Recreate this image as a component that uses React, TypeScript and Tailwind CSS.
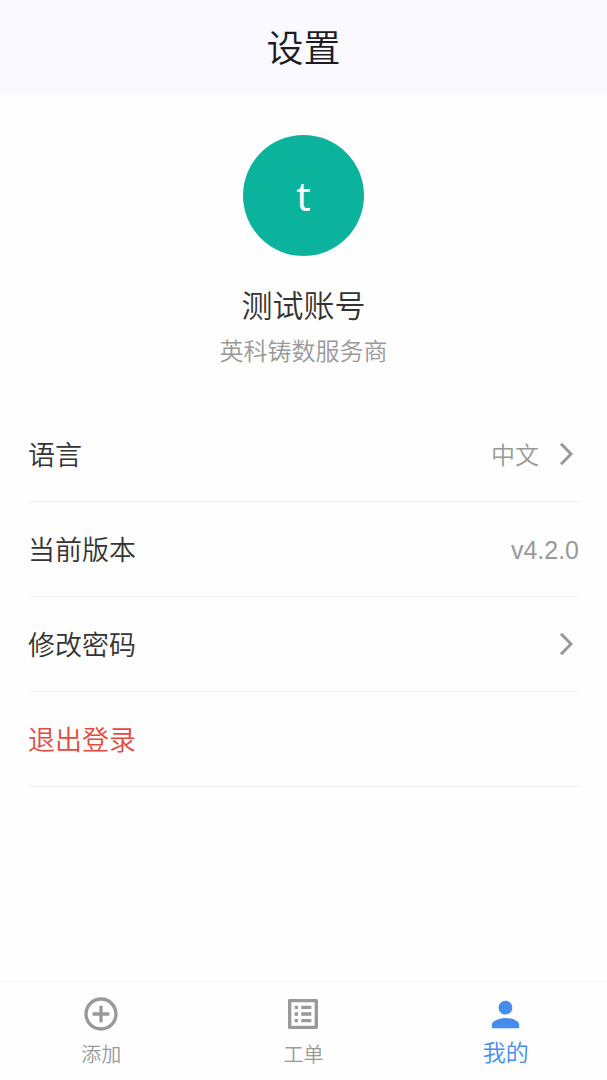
import React from 'react';
import { MdAddCircleOutline, MdListAlt, MdPerson } from 'react-icons/md';

interface SettingRow {
  id: string;
  label: string;
  value?: string;
  arrow?: boolean;
  danger?: boolean;
}

const rows: SettingRow[] = [
  { id: 'language', label: '语言', value: '中文', arrow: true },
  { id: 'version', label: '当前版本', value: 'v4.2.0' },
  { id: 'password', label: '修改密码', arrow: true },
  { id: 'logout', label: '退出登录', danger: true },
];

const Chevron: React.FC = () => (
  <svg viewBox="0 0 14 24" className="w-[14px] h-6 mr-1.5 ml-5" fill="none" stroke="#999999" strokeWidth="3" aria-hidden="true">
    <path d="M2 1.8 L12 12 L2 22.2" />
  </svg>
);

const Row: React.FC<{ row: SettingRow }> = ({ row }) => {
  const content = (
    <>
      <span className={`text-[27px] ${row.danger ? 'text-[#e64a3e]' : 'text-[#333333]'}`}>{row.label}</span>
      <span className="flex items-center text-[#999999]">
        {row.value && (
          <span className={row.arrow ? 'text-2xl' : "pt-1 font-['Liberation_Sans',sans-serif] text-[25px]"}>{row.value}</span>
        )}
        {row.arrow && <Chevron />}
      </span>
    </>
  );
  const style = 'flex w-full h-[95px] items-center justify-between border-b border-[#f2f2f2] text-left';

  // Rows that only show a value are not clickable
  return (
    <li>
      {row.arrow || row.danger ? (
        <button type="button" className={style}>{content}</button>
      ) : (
        <div className={style}>{content}</div>
      )}
    </li>
  );
};

export default function App() {
  return (
    <div className="flex min-h-screen flex-col bg-[#fefefe] font-['Noto_Sans_CJK_SC',sans-serif] font-[350]">
      <header className="flex h-[95px] items-center justify-center bg-[#f9f9ff] pb-0.5">
        <h1 className="text-[37px] font-[350] text-[#1c1b1f]">设置</h1>
      </header>

      <main className="flex-1 px-7">
        <section className="flex flex-col items-center pt-10">
          <div className="flex size-[121px] items-center justify-center rounded-full bg-[#0cb39c] font-['Noto_Sans',sans-serif] text-[40px] font-normal text-white">t</div>
          <h2 className="mt-7 text-[31px] leading-[40px] font-[350] text-[#333333]">测试账号</h2>
          <p className="mt-2.5 text-2xl leading-8 text-[#999999]">英科铸数服务商</p>
        </section>

        <ul className="mt-[41px]">
          {rows.map(row => (
            <Row key={row.id} row={row} />
          ))}
        </ul>
      </main>

      <nav className="grid h-[99px] grid-cols-3 border-t border-[#f8f8f8] pt-3">
        <button type="button" className="flex flex-col items-center text-[#999999]">
          <MdAddCircleOutline className="size-10" />
          <span className="mt-1 text-xl leading-8">添加</span>
        </button>
        <button type="button" className="flex flex-col items-center text-[#999999]">
          <MdListAlt className="size-10" />
          <span className="mt-1 text-xl leading-8">工单</span>
        </button>
        <button type="button" className="flex flex-col items-center text-[#468cee]">
          <MdPerson className="size-[41px]" />
          <span className="text-[23px] leading-8">我的</span>
        </button>
      </nav>
    </div>
  );
}
